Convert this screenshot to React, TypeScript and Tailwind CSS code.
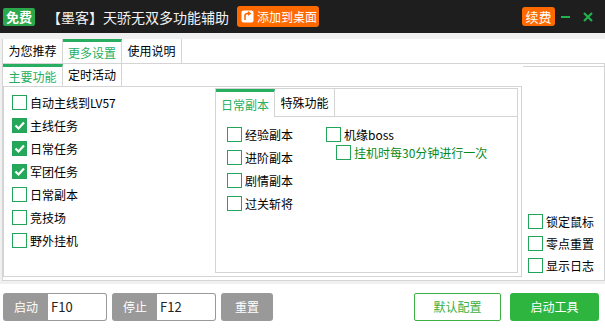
import React from 'react'

const font = 'font-["Noto_Sans_CJK_SC","Noto_Sans",sans-serif]'

function Box({ checked = false }: { checked?: boolean }) {
    return (
        <span
            className={`w-[15px] h-[15px] shrink-0 border border-[#22a45a] flex items-center justify-center ${checked ? 'bg-[#25a85a]' : 'bg-white'}`}
        >
            {checked && (
                <svg width="13" height="13" viewBox="0 0 13 13">
                    <path d="M2.5 6.5 L5.5 9.5 L11 3.5" stroke="white" strokeWidth="2.2" fill="none" />
                </svg>
            )}
        </span>
    )
}

function Check({ label, checked, green }: { label: string; checked?: boolean; green?: boolean }) {
    return (
        <div className="flex items-center gap-[3px] h-[15px]">
            <Box checked={checked} />
            <span className={`text-[12px] leading-none whitespace-nowrap ${green ? 'text-[#0a8a1a]' : 'text-black'}`}>{label}</span>
        </div>
    )
}

function Tab({ label, active, w, h }: { label: string; active?: boolean; w: string; h: string }) {
    return (
        <div
            className={`${w} ${h} flex items-center justify-center text-[12px] border-r border-[#d4d4d4] bg-white ${active ? 'border-t-[3px] border-t-[#27ae60] text-[#27ae60]' : 'text-black'}`}
        >
            {label}
        </div>
    )
}

export default function App() {
    const mainItems = [
        { label: '自动主线到LV57', checked: false },
        { label: '主线任务', checked: true },
        { label: '日常任务', checked: true },
        { label: '军团任务', checked: true },
        { label: '日常副本', checked: false },
        { label: '竞技场', checked: false },
        { label: '野外挂机', checked: false },
    ]

    return (
        <div className={`w-[605px] h-[330px] bg-white flex flex-col overflow-hidden ${font}`}>
            {/* title bar */}
            <div className="h-[33px] bg-[#1e1e1e] flex items-center pl-[3px] pr-[12px] shrink-0">
                <span className="h-[18px] w-[32px] rounded-[2px] bg-[#2ca84c] text-white text-[13px] font-bold flex items-center justify-center leading-none">
                    免费
                </span>
                <span className="ml-[12px] text-[#f2f2f2] text-[14px] leading-none whitespace-nowrap">【墨客】天骄无双多功能辅助</span>
                <span className="ml-[8px] h-[21px] w-[82px] rounded-[3px] bg-[#ff6a00] flex items-center gap-[3px] pl-[4px] text-white text-[12px] leading-none whitespace-nowrap">
                    <svg className="shrink-0" width="13" height="13" viewBox="0 0 13 13">
                        <rect x="0.5" y="0.5" width="12" height="12" rx="2" fill="white" />
                        <path d="M4 10 L4 5.5 Q4 3.5 6.5 3.5 L8.5 3.5 M7 1.8 L9 3.5 L7 5.2" stroke="#ff6a00" strokeWidth="1.6" fill="none" />
                    </svg>
                    添加到桌面
                </span>
                <span className="ml-auto h-[19px] w-[33px] rounded-[3px] bg-[#ff6a00] text-white text-[13px] leading-none flex items-center justify-center">
                    续费
                </span>
                <span className="ml-[6px] w-[9px] h-[2px] bg-[#22b14c]" />
                <svg className="ml-[13px]" width="10" height="10" viewBox="0 0 10 10">
                    <path d="M1 1 L9 9 M9 1 L1 9" stroke="#22b14c" strokeWidth="2.2" />
                </svg>
            </div>

            {/* outer tabs */}
            <div className="bg-[#f0f0f0] pt-[6px] pl-[2px] pb-[3px] h-[251px] shrink-0 flex flex-col">
                <div className="h-[24px] flex bg-white border-l border-[#d4d4d4] shrink-0">
                    <Tab label="为您推荐" w="w-[60px]" h="h-[24px]" />
                    <Tab label="更多设置" w="w-[59px]" h="h-[24px]" active />
                    <Tab label="使用说明" w="w-[60px]" h="h-[24px]" />
                </div>
                <div className="flex-1 bg-white border border-[#d4d4d4] flex">
                    {/* sub tab control */}
                    <div className="w-[519px] flex flex-col pb-[3px]">
                        <div className="h-[22px] flex shrink-0">
                            <Tab label="主要功能" w="w-[60px]" h="h-[22px]" active />
                            <Tab label="定时活动" w="w-[59px]" h="h-[22px]" />
                        </div>
                        <div className="flex-1 border border-[#d4d4d4] flex">
                            <div className="w-[211px] pl-[8px] pt-[8px] flex flex-col gap-[8px]">
                                {mainItems.map((it) => (
                                    <Check key={it.label} label={it.label} checked={it.checked} />
                                ))}
                            </div>
                            {/* inner tab control */}
                            <div className="w-[303px] mt-[1px] mb-[3px] border border-[#d4d4d4] flex flex-col">
                                <div className="h-[28px] flex shrink-0 border-b border-[#d4d4d4]">
                                    <Tab label="日常副本" w="w-[59px]" h="h-[28px]" active />
                                    <Tab label="特殊功能" w="w-[60px]" h="h-[27px]" />
                                </div>
                                <div className="flex pt-[10px] pl-[11px]">
                                    <div className="w-[99px] flex flex-col gap-[8px]">
                                        <Check label="经验副本" />
                                        <Check label="进阶副本" />
                                        <Check label="剧情副本" />
                                        <Check label="过关斩将" />
                                    </div>
                                    <div className="flex flex-col gap-[3px]">
                                        <Check label="机缘boss" />
                                        <div className="pl-[10px]">
                                            <Check label="挂机时每30分钟进行一次" green />
                                        </div>
                                    </div>
                                </div>
                            </div>
                        </div>
                    </div>
                    {/* right panel */}
                    <div className="flex-1 mt-[2px] ml-[1px] border-t border-[#d4d4d4] flex flex-col justify-end pl-[5px] pb-[7px] gap-[7px]">
                        <Check label="锁定鼠标" />
                        <Check label="零点重置" />
                        <Check label="显示日志" />
                    </div>
                </div>
            </div>

            {/* bottom bar */}
            <div className="flex items-center pt-[9px] pl-[3px] pr-[6px]">
                <div className="h-[28px] w-[104px] rounded-[3px] bg-[#999999] flex items-center p-[1px]">
                    <span className="w-[44px] text-center text-white text-[12px]">启动</span>
                    <span className="flex-1 h-full bg-white text-[13px] text-[#222] flex items-center pl-[3px] rounded-r-[2px]">F10</span>
                </div>
                <div className="ml-[5px] h-[28px] w-[104px] rounded-[3px] bg-[#999999] flex items-center p-[1px]">
                    <span className="w-[44px] text-center text-white text-[12px]">停止</span>
                    <span className="flex-1 h-full bg-white text-[13px] text-[#222] flex items-center pl-[3px] rounded-r-[2px]">F12</span>
                </div>
                <div className="ml-[5px] h-[28px] w-[52px] rounded-[3px] bg-[#999999] flex items-center justify-center text-white text-[12px]">
                    重置
                </div>
                <div className="ml-auto h-[28px] w-[87px] border border-[#3cb043] rounded-[2px] flex items-center justify-center text-[#3cb043] text-[12px]">
                    默认配置
                </div>
                <div className="ml-[9px] h-[28px] w-[89px] rounded-[3px] bg-[#2db53f] flex items-center justify-center text-white text-[12px]">
                    启动工具
                </div>
            </div>
        </div>
    )
}
